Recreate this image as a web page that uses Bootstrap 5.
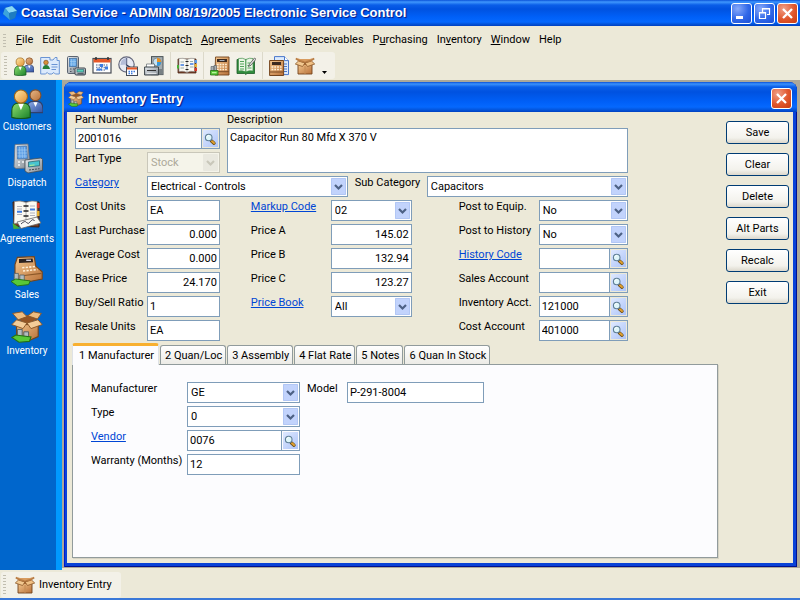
<!DOCTYPE html>
<html lang="en">
<head>
<meta charset="utf-8">
<meta name="viewport" content="width=device-width, initial-scale=1">
<title>Coastal Service - Electronic Service Control</title>
<link href="https://cdn.jsdelivr.net/npm/bootstrap@5.3.0/dist/css/bootstrap.min.css" rel="stylesheet">
<style>
  :root { --face: #ece9d8; --edge: #7f9db9; --ui: Roboto, "Liberation Sans", sans-serif; --cap: "Liberation Sans", Arial, sans-serif; }
  body { font-family: var(--ui); font-size: 11px; line-height: 14px; color: #000; background: var(--face); }
  svg { flex: none; display: block; }
  button, input, select, textarea { font: inherit; color: inherit; }

  .titlebar { height: 26px; padding: 0 2px 0 2px; background: linear-gradient(#0a52d8 0, #3f97fd 2px, #0a5ee8 5px, #0052e0 9px, #0060f8 17px, #0568fe 22px, #0354da 24px, #0040c0); color: #fff; }
  .titlebar h1, .entry-title h2 { font: 700 13px/16px var(--cap); text-shadow: 1px 1px 1px #0a1883; white-space: nowrap; overflow: hidden; }
  .win-btn { width: 21px; height: 21px; border: 1px solid #fff; border-radius: 3px; background: radial-gradient(circle at 30% 25%, #87a9fa, #3068e8 55%, #1c4fd6); }
  .win-btn.closer { background: radial-gradient(circle at 30% 25%, #f0a088, #e0562c 55%, #c73c12); }
  .win-btns { gap: 2px; }
  .app-mark { margin-right: 3px; }

  .menubar { height: 26px; padding: 2px 0 0 3px; }
  .menubar .grip { margin-right: 5px; height: 13px; }
  .menubar a { color: #000; padding: 0 4px 0 5px; white-space: nowrap; }
  .grip { width: 3px; background: repeating-linear-gradient(#c1beb0 0 1px, transparent 1px 3px); }
  .tools, .tasks { background: #f3f1e8; border-radius: 3px; }
  .tools { height: 27px; padding: 0 5px 0 3px; margin: 0 0 1px 1px; }
  .tools .grip, .tasks .grip { height: 20px; margin-right: 4px; }
  .tool { width: 26px; height: 26px; display: grid; place-items: center; border: 0; padding: 0; background: none; }
  .tool.more { width: 12px; padding-top: 14px; }
  .rule { width: 1px; height: 27px; margin: 0 3px; background: #dcd9ca; }

  .sidebar { width: 62px; flex: none; background: #0066cc; border-right: 6px solid #0099ff; padding: 7px 2px 0 0; }
  .sidebar a { height: 56px; color: #fff; white-space: nowrap; font-size: 10px; gap: 1px; }

  .workspace { background: #aca899; padding: 2px 3px 1px 2px; min-width: 0; margin-bottom: 2px; }
  .entry { background: #0842d8; border-radius: 8px 8px 0 0; padding: 0 4px 4px 3px; box-shadow: inset 1px 0 #0019cf, inset -1px -1px #001090; }
  .entry-title { height: 30px; margin: 0 -4px 0 -3px; padding: 3px 5px 0 4px; border-radius: 8px 8px 0 0; color: #fff; background: linear-gradient(#0a50d8 0, #3c92fc 2px, #0a5ee8 5px, #0052e0 10px, #0060f8 20px, #0568fe 25px, #0354da 28px, #0040c0); }
  .entry-body { background: var(--face); padding: 1px 4px 5px 5px; }

  .fields { width: 86%; padding-left: 3px; }
  .top-grid { display: grid; grid-template-columns: 145fr 401fr; column-gap: 7px; row-gap: 1px; }
  .category-row { margin: 3px 0; }
  .sub-cap { margin-left: 7px; }
  .main-grid { display: grid; grid-template-columns: 72px 73fr 31fr 80px 81fr 47fr 80px 89fr; row-gap: 3px; }
  .main-grid > *, .top-grid > * { min-width: 0; }
  .c4 { grid-column: 4; }
  .c7 { grid-column: 7; }
  .cap { white-space: nowrap; font-size: 11px; line-height: 14px; align-self: start; }
  .w72 { width: 72px; flex: none; }
  a.cap { color: #0046d5; }
  .box { width: 100%; min-width: 0; height: 21px; border: 1px solid var(--edge); border-radius: 0; background-color: #fff; padding: 0 2px; }
  .box.num { text-align: right; }
  textarea.box { height: 45px; resize: none; padding-top: 2px; display: block; }
  select.box { padding: 0 18px 0 3px; appearance: none; background: #fff url("data:image/svg+xml,%3Csvg xmlns='http://www.w3.org/2000/svg' width='15' height='17'%3E%3Crect width='15' height='17' rx='1' fill='%23c2d3fc'/%3E%3Cpath d='M.5 .5h14v16H.5z' fill='none' stroke='%23b2c7f5'/%3E%3Cpath d='M4 7l3.500 3.500L11 7' fill='none' stroke='%234d6185' stroke-width='2.200'/%3E%3C/svg%3E") no-repeat right 1px center; }
  select.box:disabled { color: #aca899; border-color: #c9c7ba; opacity: 1; background: #f5f4ea url("data:image/svg+xml,%3Csvg xmlns='http://www.w3.org/2000/svg' width='15' height='17'%3E%3Crect width='15' height='17' rx='1' fill='%23e9e8df'/%3E%3Cpath d='M4 7l3.500 3.500L11 7' fill='none' stroke='%23c9c7ba' stroke-width='2.200'/%3E%3C/svg%3E") no-repeat right 1px center; }
  .seek { width: 18px; flex: none; height: 21px; border: 1px solid var(--edge); border-left: 0; padding: 1px; background: linear-gradient(135deg, #dfe9ff, #adc4f8) content-box #fff; }

  .tabset { padding-top: 2px; }
  .nav-tabs.pages { border: 0; height: 21px; gap: 1px; flex-wrap: nowrap; align-items: flex-end; }
  .pages .nav-link { height: 19px; padding: 2px 3px 0 4px; border: 1px solid #919b9c; border-bottom: 0; border-radius: 3px 3px 0 0; color: #000; background: linear-gradient(#fff, #ecebe6); margin: 0; white-space: nowrap; }
  .pages .nav-link.active { height: 22px; position: relative; z-index: 1; margin-bottom: -1px; padding: 0 4px 0 6px; border-top: 3px solid #f8b030; background: #fcfcfe; }
  .sheet { border: 1px solid #919b9c; background: #fcfcfe; padding: 17px 18px; box-shadow: 1px 1px #d6d3c4; }
  .sheet-rows { gap: 3px; }
  .w96 { width: 96px; flex: none; }
  .mfr { width: 113px; flex: none; }
  .model-cap { width: 40px; margin-left: 7px; flex: none; }
  .model-box { width: 137px; }

  .actions { width: 63px; flex: none; padding-top: 8px; gap: 9px; }
  .push { height: 23px; border: 1px solid #003c74; border-radius: 3px; background: linear-gradient(#fff, #f3f2ec 75%, #dcd8cc); padding: 0; }
  .status { height: 30px; padding: 2px 0 0 1px; border-bottom: 2px solid #3a78d8; }
  .tasks { padding: 0 9px 0 2px; }
  .tasks .btn { border: 0; padding: 0 0 0 5px; color: #000; font-size: 11px; line-height: 14px; }
</style>
<script src="https://cdn.jsdelivr.net/npm/bootstrap@5.3.0/dist/js/bootstrap.bundle.min.js"></script>
</head>
<body class="d-flex flex-column min-vh-100">

<svg width="0" height="0" class="position-absolute" aria-hidden="true">
  <defs>
    <linearGradient id="skin" x2="1" y2="1"><stop stop-color="#ffe8a8"/><stop offset="1" stop-color="#e09030"/></linearGradient>
    <linearGradient id="skin2" x2="1" y2="1"><stop stop-color="#e8b888"/><stop offset="1" stop-color="#b87038"/></linearGradient>
    <linearGradient id="grn" x2="1" y2="1"><stop stop-color="#90e070"/><stop offset="1" stop-color="#188028"/></linearGradient>
    <linearGradient id="blu" x2="1" y2="1"><stop stop-color="#90b0e8"/><stop offset="1" stop-color="#3050a0"/></linearGradient>
    <linearGradient id="tan" x2="1" y2="1"><stop stop-color="#f4c890"/><stop offset="1" stop-color="#b87038"/></linearGradient>
    <linearGradient id="gry" x2="1" y2="1"><stop stop-color="#e8ecf0"/><stop offset="1" stop-color="#808890"/></linearGradient>
  </defs>
  <symbol id="i-people" viewBox="0 0 20 20">
    <path d="M10 16v-3q0-4 4-4h2q4 0 4 5v2z" fill="url(#blu)" stroke="#30406c" stroke-width=".7"/>
    <path d="M14 9.500l1.300 3 1.300-3z" fill="#fff"/>
    <circle cx="15.300" cy="5.200" r="3.400" fill="url(#skin2)" stroke="#855028" stroke-width=".7"/>
    <path d="M.5 19v-4q0-5 4.500-5h2.500q4.500 0 4.500 5v4q-6 1.500-11.500 0z" fill="url(#grn)" stroke="#14561c" stroke-width=".7"/>
    <path d="M4.500 10.500l1.700 4 1.800-4z" fill="#fff"/>
    <circle cx="6.200" cy="6" r="4.100" fill="url(#skin)" stroke="#a06818" stroke-width=".7"/>
  </symbol>
  <symbol id="i-card" viewBox="0 0 20 20">
    <path d="M.7 1.500h9.300v2.500h3l2-2.500h2v3h2.300v13.500h-4l-1.500-1.500-2 1.500h-3l-1.500-1.500-2 1.500H.7z" fill="#dceafc" stroke="#6a94d4"/>
    <path d="M2.500 13q.5-4 3.500-4t4 4z" fill="#258038"/><circle cx="6" cy="6.500" r="2.300" fill="#d89038" stroke="#704018" stroke-width=".6"/>
    <path d="M11.500 8.500h6M11.500 11h6M11.500 13.500h4.500" stroke="#6a94d4"/>
  </symbol>
  <symbol id="i-pda" viewBox="0 0 20 20">
    <rect x="1.500" y=".5" width="11" height="17" rx="1.200" fill="url(#gry)" stroke="#5c6470"/>
    <rect x="3.500" y="2.500" width="7" height="8" fill="#66a8e8" stroke="#3d6da0" stroke-width=".7"/>
    <path d="M5.500 3v7M8 3v7M4 5.500h6M4 8h6" stroke="#a6d0f4" stroke-width=".6"/>
    <path d="M4 13h1.500M7 13h1.500M4 15.500h1.500" stroke="#48515c"/>
    <rect x="9" y="12" width="10.500" height="7" rx="1.200" fill="url(#gry)" stroke="#3c444c"/>
    <rect x="11" y="13.500" width="6.500" height="2.500" fill="#58d0b8" stroke="#2d6670" stroke-width=".6"/><path d="M11.500 17.700h6" stroke="#48515c"/>
  </symbol>
  <symbol id="i-pda-big" viewBox="0 0 32 32">
    <path d="M4 1.500L17 1l2 22-1 2L5 25.500 3 24z" fill="url(#gry)" stroke="#68707c" stroke-width=".8"/>
    <path d="M6 3.500l9.500-.4 1 12.500-10 .4z" fill="#5a9ce4" stroke="#3a68a0" stroke-width=".6"/>
    <path d="M8.500 4l.4 11M11 4l.4 11M13.500 4l.4 11M6.500 7h9.500M6.500 10h9.500M6.500 13h9.500" stroke="#a0ccf4" stroke-width=".7"/>
    <path d="M7 19h2M11 19h2M7 22h2" stroke="#f4f6f8" stroke-width="1.400"/>
    <path d="M14 17l16-2 1.500 1.500v11L17 30l-3-2z" fill="url(#gry)" stroke="#444c54" stroke-width=".8"/>
    <path d="M17.500 19l11-1.300v5l-11 1.300z" fill="#48c4d0" stroke="#225a64" stroke-width=".7"/><path d="M18.500 22.500l5-.6" stroke="#b8f090"/>
    <path d="M18 27l10.500-1.300" stroke="#404850" stroke-dasharray="2 1"/>
  </symbol>
  <symbol id="i-cal" viewBox="0 0 20 20">
    <rect x="1" y="2.500" width="18" height="14.500" fill="#fff" stroke="#484c54" stroke-width="1.200"/>
    <path d="M1.500 3h17v3.500h-17z" fill="#e85828"/><path d="M4 1v3M16 1v3" stroke="#333" stroke-width="1.500"/>
    <path d="M4 9h12M4 11.500h12M4 14h9" stroke="#8090b0" stroke-width="1.400" stroke-dasharray="1.500 1"/>
    <path d="M8 8h3v3H8zM13 10.500h3v3h-3zM5 12.500h5v2H5z" fill="#3f7ce0"/>
  </symbol>
  <symbol id="i-clock" viewBox="0 0 20 20">
    <circle cx="8.500" cy="8.500" r="7.700" fill="#e6e9f4" stroke="#64687c" stroke-width="1.200"/>
    <path d="M8.500 2v7l4 2.500" fill="none" stroke="#273055" stroke-width="1.300"/><path d="M8.500 2a6.500 6.500 0 0 0-6 7l6-.5z" fill="#b4bcd8"/>
    <rect x="8.500" y="11" width="11" height="8.500" fill="#fff" stroke="#454a54"/><path d="M9 11.500h10v2H9z" fill="#e85828"/>
    <path d="M10.500 15.500h7M10.500 17.500h5" stroke="#3f7ce0" stroke-width="1.300" stroke-dasharray="1.500 1"/>
  </symbol>
  <symbol id="i-print" viewBox="0 0 20 20">
    <rect x="7.500" y=".6" width="11.500" height="18" fill="#a4acb0" stroke="#4c5458"/>
    <circle cx="13" cy="6" r="4" fill="#c8e4f4" stroke="#6a7880" stroke-width=".7"/><path d="M13 6V2a4 4 0 0 1 4 4z" fill="#e89020"/><path d="M13 6h4a4 4 0 0 1-4 4z" fill="#3898d8"/>
    <path d="M2.500 8h8v4h-8z" fill="#fff" stroke="#60686c" stroke-width=".7"/>
    <path d="M.6 11h13.900v8H.6z" fill="url(#gry)" stroke="#3c4448"/><path d="M3 14.500h9" stroke="#333"/><path d="M2.500 17.300h10" stroke="#f0f2f4"/><path d="M15 13h4v5.500h-4z" fill="#788084"/>
  </symbol>
  <symbol id="i-planner" viewBox="0 0 20 20">
    <path d="M1 3h18v14H1z" fill="#7a4028" stroke="#4c2818" stroke-width=".8"/>
    <path d="M2 2.500q4-1 8 1 4-2 7.500-1v13q-4-1-7.500 1-4-2-8-1z" fill="#fbfaf2" stroke="#888" stroke-width=".6"/>
    <path d="M10 3v13" stroke="#888" stroke-width=".7"/><path d="M8.500 5.500h3M8.500 9.500h3M8.500 13.500h3" stroke="#222" stroke-width="1.200"/>
    <path d="M3.500 6h3.500M3.500 12h3.500M13 5.500h3M13 11h3.500" stroke="#9aa"/><path d="M3.500 9h3.500M13 8h3.500" stroke="#3f7ce0" stroke-width="1.500"/>
    <path d="M17.500 4H20v3h-2.500z" fill="#5a9ae8"/><path d="M17.500 8H20v3h-2.500z" fill="#e8b030"/><path d="M17.500 12H20v3h-2.500z" fill="#d83828"/><path d="M0 9h2v3.500H0z" fill="#48b038"/>
  </symbol>
  <symbol id="i-agree" viewBox="0 0 32 32">
    <path d="M2 3h26v25L3 27z" fill="#7a4028" stroke="#3c2010"/>
    <path d="M3.500 2.500q6-1.500 11.500 1 5.500-2.500 11-1v22q-6-1.500-11 1.500-6-3-12-1.500z" fill="#fbfaf2" stroke="#888" stroke-width=".7"/>
    <path d="M15 3.500v22" stroke="#999" stroke-width=".8"/><path d="M12.500 7h5M12.500 12h5M12.500 17h5" stroke="#222" stroke-width="1.500"/>
    <path d="M6 7.500h5M6 10h5M6 15.500h5M19 7h5M19 14h5M19 16.500h5" stroke="#b0b0bc"/><path d="M6 12.800h5M19 10.500h5" stroke="#3f7ce0" stroke-width="2"/>
    <path d="M26 4h2.500v5H26z" fill="#d83828"/><path d="M26 12h2.500v5H26z" fill="#e8b030"/>
    <path d="M6 23l20-5 4 6-20 5.500z" fill="#fafaf6" stroke="#666" stroke-width=".8"/><path d="M10 25q4-4 5.500-1.500t4-1 4-.5" fill="none" stroke="#334" stroke-width=".9"/>
    <path d="M1.500 24l8 5.500-7 .5z" fill="#48b038"/>
  </symbol>
  <symbol id="i-till" viewBox="0 0 20 20">
    <path d="M5.500 1h13.500v18H5z" fill="url(#tan)" stroke="#74441c" stroke-width=".9"/>
    <path d="M7 3h10v3H7z" fill="#3c2a20"/><path d="M9.500 4.500h5" stroke="#bcd" stroke-width=".8"/>
    <path d="M7 8.500h10.500M7 11h10.500M7 13.500h10.500" stroke="#fff0d8" stroke-width="1.300" stroke-dasharray="1.700 1"/><path d="M5 15.700h14" stroke="#7c4c24"/>
    <path d="M1 10.500h3v5H1zM4 9.500h2.500v6H4z" fill="#a8b0b4" stroke="#555d60" stroke-width=".6"/>
    <path d="M.5 14.500h7.500v4.500H.5z" fill="#58c838" stroke="#247018" stroke-width=".8"/><path d="M2 16.700h4.500" stroke="#cfffb8"/>
  </symbol>
  <symbol id="i-register" viewBox="0 0 20 20">
    <path d="M4 1.500L14.500 1l1 6 4 3.500v4.500L7 17.500 2.500 13V6z" fill="url(#tan)" stroke="#74441c" stroke-width=".7"/>
    <path d="M5 2.500l8.500-.3.300 2.300-8.800.5z" fill="#2c2220"/><path d="M9.500 3.300h3" stroke="#dde" stroke-width=".8"/>
    <path d="M7 8l8-.8M7.500 10l9-.9" stroke="#fff0d8" stroke-dasharray="1.400 .8"/><path d="M7 13l12-1.500" stroke="#8c5828" stroke-width=".7"/>
    <path d="M2 11.500h2.600v5H2zM5.500 12.500h2.800v5H5.500z" fill="#b4bcc0" stroke="#555d60" stroke-width=".5"/>
    <path d="M0 16.500L3 15l9 1.200-1 2.300-7 .8z" fill="#58c838" stroke="#247018" stroke-width=".6"/>
  </symbol>
  <symbol id="i-book" viewBox="0 0 20 20">
    <path d="M1 3.500h17.500v14H11l-1.300 1-1.200-1H1z" fill="#2f8c3c" stroke="#1c5a26" stroke-width=".8"/>
    <path d="M2.500 2.500q4-1 7.300 1 3.700-2 7.200-1v12.500q-4-1-7.200 1-3.800-2-7.300-1z" fill="#eaf6e4" stroke="#3f8c48" stroke-width=".7"/>
    <path d="M9.800 3.500v12.500" stroke="#2f8c3c"/><path d="M4 5.500h4M4 8h4M4 10.500h4M4 13h4M11.500 7h3M11.500 9.500h3M11.500 12h4" stroke="#54a45c"/>
    <path d="M12.500 10.500l1-2.500 5-6 1.500 1.200-5 6z" fill="#e0e0e0" stroke="#444" stroke-width=".7"/>
  </symbol>
  <symbol id="i-tilldoc" viewBox="0 0 20 20">
    <path d="M5.500.6h10l4 4v14h-14z" fill="#dceafc" stroke="#4a78cc"/><path d="M15.500.6v4h4" fill="#fff" stroke="#4a78cc"/><path d="M15 8h3M15 10.500h3M15 13h3M15 15.500h3" stroke="#4a78cc"/>
    <path d="M.6 4.500h14v15H.6z" fill="url(#tan)" stroke="#74441c"/>
    <path d="M3 6h9v3H3z" fill="#3c2a20"/><path d="M2.500 11h10.500M2.500 13.500h10.500" stroke="#fff0d8" stroke-width="1.400" stroke-dasharray="1.800 1"/><path d="M1 16h13" stroke="#7c4c24"/>
  </symbol>
  <symbol id="i-box" viewBox="0 0 20 20">
    <path d="M3 8h14v10H3z" fill="url(#tan)" stroke="#74441c" stroke-width=".9"/>
    <path d="M4 4h12v5H4z" fill="#a86430"/><path d="M2 2l2 3 5.500 1.500L11 6l5-1.500L18 2l-3 1H5z" fill="#d89c60"/>
    <path d="M3.500 5l6.500 2-2.500 3.500L.3 8z" fill="#f2c890" stroke="#8c5828" stroke-width=".8"/>
    <path d="M16.500 5L10 7l2.500 3.500L19.700 8z" fill="#f0c084" stroke="#8c5828" stroke-width=".8"/>
    <path d="M.8 2.500l3.400 2.200L9.500 6M19.200 2.500l-3.400 2.200L10.500 6" fill="none" stroke="#b87c44" stroke-width="1.700"/><path d="M10 10v8" stroke="#c48c54"/>
  </symbol>
  <symbol id="i-boxcash" viewBox="0 0 20 20">
    <path d="M3.500 6.500l6.500 2 7-2v9.500l-7 3-6.500-2z" fill="url(#tan)" stroke="#74441c" stroke-width=".7"/>
    <path d="M4 5l6-2.500L16.500 5 10 8z" fill="#945424"/>
    <path d="M1 1.500l6-1 3 3L4.500 5.500zM10.500 3L14 .5l5 1L16.500 5z" fill="#eebc80" stroke="#8c5828" stroke-width=".6"/>
    <path d="M3.500 5.500l6.500 2L7.500 11 .5 8.500zM16.800 5.500L10 7.500l2.500 3.500 7-2.500z" fill="#f4cc98" stroke="#8c5828" stroke-width=".6"/>
    <path d="M4 11.500h3v5H4zM8 13h3v4.500H8z" fill="#b4bcc0" stroke="#555d60" stroke-width=".6"/>
    <path d="M.5 16.500L3 15l9.500 1.200-1 2.800-6.500.5z" fill="#58c838" stroke="#247018" stroke-width=".7"/>
  </symbol>
  <symbol id="i-lens" viewBox="0 0 14 16">
    <path d="M8.500 10l2.500 2.200" stroke="#6b4d16" stroke-width="3.400" stroke-linecap="round"/><path d="M9 10.300l2 1.800" stroke="#e0a030" stroke-width="2" stroke-linecap="round"/>
    <circle cx="5.700" cy="6.500" r="3.300" fill="#dff6fa" stroke="#5f7f96" stroke-width="1.100"/><path d="M3.800 6q.5-1.500 2-1.700" stroke="#fff" fill="none"/>
  </symbol>
  <symbol id="i-cube" viewBox="0 0 16 16">
    <path d="M3 3l7-2 5 5-2 7-5 2-7-6z" fill="#1c70b8"/><path d="M3 3l7-2 5 5-8 2z" fill="#8ad8f4"/><path d="M3 3l4 5 1 7-7-6z" fill="#3ca4dc"/><path d="M7 8l8-2-2 7-5 2z" fill="#1e7cc0"/>
  </symbol>
  <symbol id="i-x" viewBox="0 0 19 19"><path d="M5 5l9 9M14 5l-9 9" stroke="#fff" stroke-width="2.300"/></symbol>
</svg>

<header>
  <div class="titlebar d-flex align-items-center">
    <svg width="16" height="16" class="app-mark"><use href="#i-cube"/></svg>
    <h1 class="m-0 flex-grow-1">Coastal Service - ADMIN 08/19/2005 Electronic Service Control</h1>
    <div class="win-btns d-flex ms-2">
      <button type="button" class="win-btn p-0" aria-label="Minimize"><svg width="19" height="19"><path d="M4 12h7v3H4z" fill="#fff"/></svg></button>
      <button type="button" class="win-btn p-0" aria-label="Restore"><svg width="19" height="19"><path d="M7.500 8V4.500h7v6H12M7 5h8M4.500 8.500h6v6h-6zM4 9h7" fill="none" stroke="#fff" stroke-width="1.200"/></svg></button>
      <button type="button" class="win-btn closer p-0" aria-label="Close"><svg width="19" height="19"><use href="#i-x"/></svg></button>
    </div>
  </div>
  <nav class="menubar d-flex align-items-center" aria-label="Main menu">
    <span class="grip"></span>
    <a class="text-decoration-none" href="#"><u>F</u>ile</a>
    <a class="text-decoration-none" href="#">Edit</a>
    <a class="text-decoration-none" href="#">Customer <u>I</u>nfo</a>
    <a class="text-decoration-none" href="#">Dispatc<u>h</u></a>
    <a class="text-decoration-none" href="#"><u>A</u>greements</a>
    <a class="text-decoration-none" href="#">Sa<u>l</u>es</a>
    <a class="text-decoration-none" href="#"><u>R</u>eceivables</a>
    <a class="text-decoration-none" href="#">P<u>u</u>rchasing</a>
    <a class="text-decoration-none" href="#">In<u>v</u>entory</a>
    <a class="text-decoration-none" href="#"><u>W</u>indow</a>
    <a class="text-decoration-none" href="#">Help</a>
  </nav>
  <div class="d-flex">
    <div class="tools d-flex align-items-center" role="toolbar" aria-label="Shortcuts">
      <span class="grip"></span>
      <button type="button" class="tool" aria-label="Customers"><svg width="20" height="20"><use href="#i-people"/></svg></button>
      <button type="button" class="tool" aria-label="Contact card"><svg width="20" height="20"><use href="#i-card"/></svg></button>
      <button type="button" class="tool" aria-label="Dispatch"><svg width="20" height="20"><use href="#i-pda"/></svg></button>
      <button type="button" class="tool" aria-label="Calendar"><svg width="20" height="20"><use href="#i-cal"/></svg></button>
      <button type="button" class="tool" aria-label="Schedule"><svg width="20" height="20"><use href="#i-clock"/></svg></button>
      <button type="button" class="tool" aria-label="Print reports"><svg width="20" height="20"><use href="#i-print"/></svg></button>
      <span class="rule"></span>
      <button type="button" class="tool" aria-label="Agreements"><svg width="20" height="20"><use href="#i-planner"/></svg></button>
      <span class="rule"></span>
      <button type="button" class="tool" aria-label="Sales"><svg width="20" height="20"><use href="#i-till"/></svg></button>
      <button type="button" class="tool" aria-label="Ledger"><svg width="20" height="20"><use href="#i-book"/></svg></button>
      <span class="rule"></span>
      <button type="button" class="tool" aria-label="Invoices"><svg width="20" height="20"><use href="#i-tilldoc"/></svg></button>
      <button type="button" class="tool" aria-label="Inventory"><svg width="20" height="20"><use href="#i-box"/></svg></button>
      <button type="button" class="tool more" aria-label="More tools"><svg width="5" height="3"><path d="M0 0h5L2.500 3z"/></svg></button>
    </div>
  </div>
</header>

<div class="d-flex flex-grow-1">
  <nav class="sidebar d-flex flex-column" aria-label="Sections">
    <a href="#" class="d-flex flex-column align-items-center text-decoration-none"><svg width="32" height="32"><use href="#i-people"/></svg>Customers</a>
    <a href="#" class="d-flex flex-column align-items-center text-decoration-none"><svg width="32" height="32"><use href="#i-pda-big"/></svg>Dispatch</a>
    <a href="#" class="d-flex flex-column align-items-center text-decoration-none"><svg width="32" height="32"><use href="#i-agree"/></svg>Agreements</a>
    <a href="#" class="d-flex flex-column align-items-center text-decoration-none"><svg width="32" height="32"><use href="#i-register"/></svg>Sales</a>
    <a href="#" class="d-flex flex-column align-items-center text-decoration-none"><svg width="32" height="32"><use href="#i-boxcash"/></svg>Inventory</a>
  </nav>

  <main class="workspace flex-grow-1 d-flex">
    <section class="entry flex-grow-1 d-flex flex-column">
      <div class="entry-title d-flex align-items-center">
        <svg width="16" height="16" class="me-1"><use href="#i-boxcash"/></svg>
        <h2 class="m-0 flex-grow-1">Inventory Entry</h2>
        <button type="button" class="win-btn closer p-0" aria-label="Close window"><svg width="19" height="19"><use href="#i-x"/></svg></button>
      </div>
      <form class="entry-body flex-grow-1 d-flex gap-2">
        <div class="flex-grow-1 d-flex flex-column">
          <div class="fields">
            <div class="top-grid">
              <label class="cap" for="part">Part Number</label>
              <label class="cap" for="desc">Description</label>
              <div class="d-flex flex-column justify-content-between">
                <div class="d-flex"><input class="box" id="part" value="2001016"><button type="button" class="seek" aria-label="Find part"><svg width="14" height="16"><use href="#i-lens"/></svg></button></div>
                <div class="d-flex"><label class="cap w72" for="ptype">Part Type</label><select class="box" id="ptype" disabled><option>Stock</option></select></div>
              </div>
              <textarea class="box" id="desc">Capacitor Run 80 Mfd X 370 V</textarea>
            </div>
            <div class="d-flex category-row">
              <a href="#" class="cap w72" id="cat-l">Category</a>
              <select class="box" aria-labelledby="cat-l"><option>Electrical - Controls</option></select>
              <label class="cap w72 sub-cap" for="sub">Sub Category</label>
              <select class="box" id="sub"><option>Capacitors</option></select>
            </div>
            <div class="main-grid">
              <label class="cap" for="cu">Cost Units</label><input class="box" id="cu" value="EA">
              <a href="#" class="cap c4" id="mk-l">Markup Code</a><select class="box" aria-labelledby="mk-l"><option>02</option></select>
              <label class="cap c7" for="pe">Post to Equip.</label><select class="box" id="pe"><option>No</option></select>

              <label class="cap" for="lp">Last Purchase</label><input class="box num" id="lp" value="0.000">
              <label class="cap c4" for="pa">Price A</label><input class="box num" id="pa" value="145.02">
              <label class="cap c7" for="ph">Post to History</label><select class="box" id="ph"><option>No</option></select>

              <label class="cap" for="ac">Average Cost</label><input class="box num" id="ac" value="0.000">
              <label class="cap c4" for="pb">Price B</label><input class="box num" id="pb" value="132.94">
              <a href="#" class="cap c7" id="hc-l">History Code</a><div class="d-flex"><input class="box" aria-labelledby="hc-l"><button type="button" class="seek" aria-label="Find history code"><svg width="14" height="16"><use href="#i-lens"/></svg></button></div>

              <label class="cap" for="bp">Base Price</label><input class="box num" id="bp" value="24.170">
              <label class="cap c4" for="pc">Price C</label><input class="box num" id="pc" value="123.27">
              <label class="cap c7" for="sa">Sales Account</label><div class="d-flex"><input class="box" id="sa"><button type="button" class="seek" aria-label="Find sales account"><svg width="14" height="16"><use href="#i-lens"/></svg></button></div>

              <label class="cap" for="bs">Buy/Sell Ratio</label><input class="box" id="bs" value="1">
              <a href="#" class="cap c4" id="bk-l">Price Book</a><select class="box" aria-labelledby="bk-l"><option>All</option></select>
              <label class="cap c7" for="ia">Inventory Acct.</label><div class="d-flex"><input class="box" id="ia" value="121000"><button type="button" class="seek" aria-label="Find inventory account"><svg width="14" height="16"><use href="#i-lens"/></svg></button></div>

              <label class="cap" for="ru">Resale Units</label><input class="box" id="ru" value="EA">
              <label class="cap c7" for="ca">Cost Account</label><div class="d-flex"><input class="box" id="ca" value="401000"><button type="button" class="seek" aria-label="Find cost account"><svg width="14" height="16"><use href="#i-lens"/></svg></button></div>
            </div>
          </div>

          <div class="tabset flex-grow-1 d-flex flex-column">
            <div class="nav nav-tabs pages" role="tablist">
              <button type="button" class="nav-link active" role="tab" aria-selected="true">1 Manufacturer</button>
              <button type="button" class="nav-link" role="tab">2 Quan/Loc</button>
              <button type="button" class="nav-link" role="tab">3 Assembly</button>
              <button type="button" class="nav-link" role="tab">4 Flat Rate</button>
              <button type="button" class="nav-link" role="tab">5 Notes</button>
              <button type="button" class="nav-link" role="tab">6 Quan In Stock</button>
            </div>
            <div class="sheet flex-grow-1" role="tabpanel">
              <div class="sheet-rows d-flex flex-column">
                <div class="d-flex">
                  <label class="cap w96" for="mf">Manufacturer</label><select class="box mfr" id="mf"><option>GE</option></select>
                  <label class="cap model-cap" for="md">Model</label><input class="box model-box" id="md" value="P-291-8004">
                </div>
                <div class="d-flex"><label class="cap w96" for="ty">Type</label><select class="box mfr" id="ty"><option>0</option></select></div>
                <div class="d-flex"><a href="#" class="cap w96" id="vn-l">Vendor</a><div class="mfr d-flex"><input class="box" aria-labelledby="vn-l" value="0076"><button type="button" class="seek" aria-label="Find vendor"><svg width="14" height="16"><use href="#i-lens"/></svg></button></div></div>
                <div class="d-flex"><label class="cap w96" for="wm">Warranty (Months)</label><input class="box mfr" id="wm" value="12"></div>
              </div>
            </div>
          </div>
        </div>

        <div class="actions d-flex flex-column">
          <button type="button" class="push">Save</button>
          <button type="button" class="push">Clear</button>
          <button type="button" class="push">Delete</button>
          <button type="button" class="push">Alt Parts</button>
          <button type="button" class="push">Recalc</button>
          <button type="button" class="push">Exit</button>
        </div>
      </form>
    </section>
  </main>
</div>

<footer class="status d-flex">
  <div class="tasks d-flex align-items-center">
    <span class="grip"></span>
    <button type="button" class="btn d-flex align-items-center gap-1"><svg width="20" height="20"><use href="#i-box"/></svg>Inventory Entry</button>
  </div>
</footer>
</body>
</html>
